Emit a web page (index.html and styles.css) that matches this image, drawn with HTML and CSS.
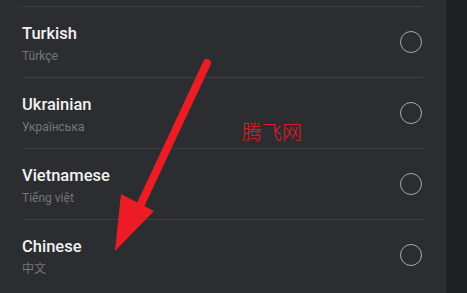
FILE: index.html
```html
<!DOCTYPE html>
<html lang="en">
<head>
<meta charset="utf-8">
<link rel="stylesheet" href="styles.css">
</head>
<body>
<div class="app">
  <div class="list">
    <div class="row">
      <div class="texts"><div class="title">Turkish</div><div class="sub">Türkçe</div></div>
      <span class="radio"></span>
    </div>
    <div class="row">
      <div class="texts"><div class="title">Ukrainian</div><div class="sub">Українська</div></div>
      <span class="radio"></span>
    </div>
    <div class="row">
      <div class="texts"><div class="title">Vietnamese</div><div class="sub">Tiếng việt</div></div>
      <span class="radio"></span>
    </div>
    <div class="row">
      <div class="texts"><div class="title">Chinese</div><div class="sub">中文</div></div>
      <span class="radio"></span>
    </div>
  </div>
  <div class="strip"></div>
</div>
<div class="watermark">腾飞网</div>
<svg class="arrow" width="467" height="293" viewBox="0 0 467 293">
  <line x1="207" y1="63" x2="140" y2="206" stroke="#ec1c24" stroke-width="8" stroke-linecap="round"/>
  <polygon points="121,194 154,211 115,251" fill="#ec1c24"/>
</svg>
</body>
</html>
```
FILE: styles.css
```css
html, body {
  margin: 0;
  padding: 0;
  width: 467px;
  height: 293px;
  overflow: hidden;
  background: #2c2d30;
  font-family: Roboto, "Noto Sans CJK SC", sans-serif;
}
.app {
  display: flex;
  height: 293px;
}
.list {
  flex: 1;
  padding: 6px 23px 0 22px;
}
.row {
  border-top: 1px solid #3d3e41;
  height: 70px;
  display: flex;
  align-items: center;
  justify-content: space-between;
}
.texts {
  display: flex;
  flex-direction: column;
  padding-top: 4px;
}
.title {
  color: #f2f2f2;
  font-size: 16.5px;
  font-weight: 500;
  line-height: 20px;
}
.sub {
  color: #75777a;
  font-size: 12px;
  line-height: 16px;
  margin-top: 4px;
}
.radio {
  width: 20px;
  height: 20px;
  border: 1.5px solid #a9aaac;
  border-radius: 50%;
  margin-right: 1px;
}
.strip {
  width: 21px;
  background: #1f2022;
}
.watermark {
  position: absolute;
  left: 242px;
  top: 117px;
  color: #e21c24;
  font-family: "Noto Sans CJK SC", sans-serif;
  font-weight: 300;
  font-size: 20px;
}
.arrow {
  position: absolute;
  left: 0;
  top: 0;
}
```
